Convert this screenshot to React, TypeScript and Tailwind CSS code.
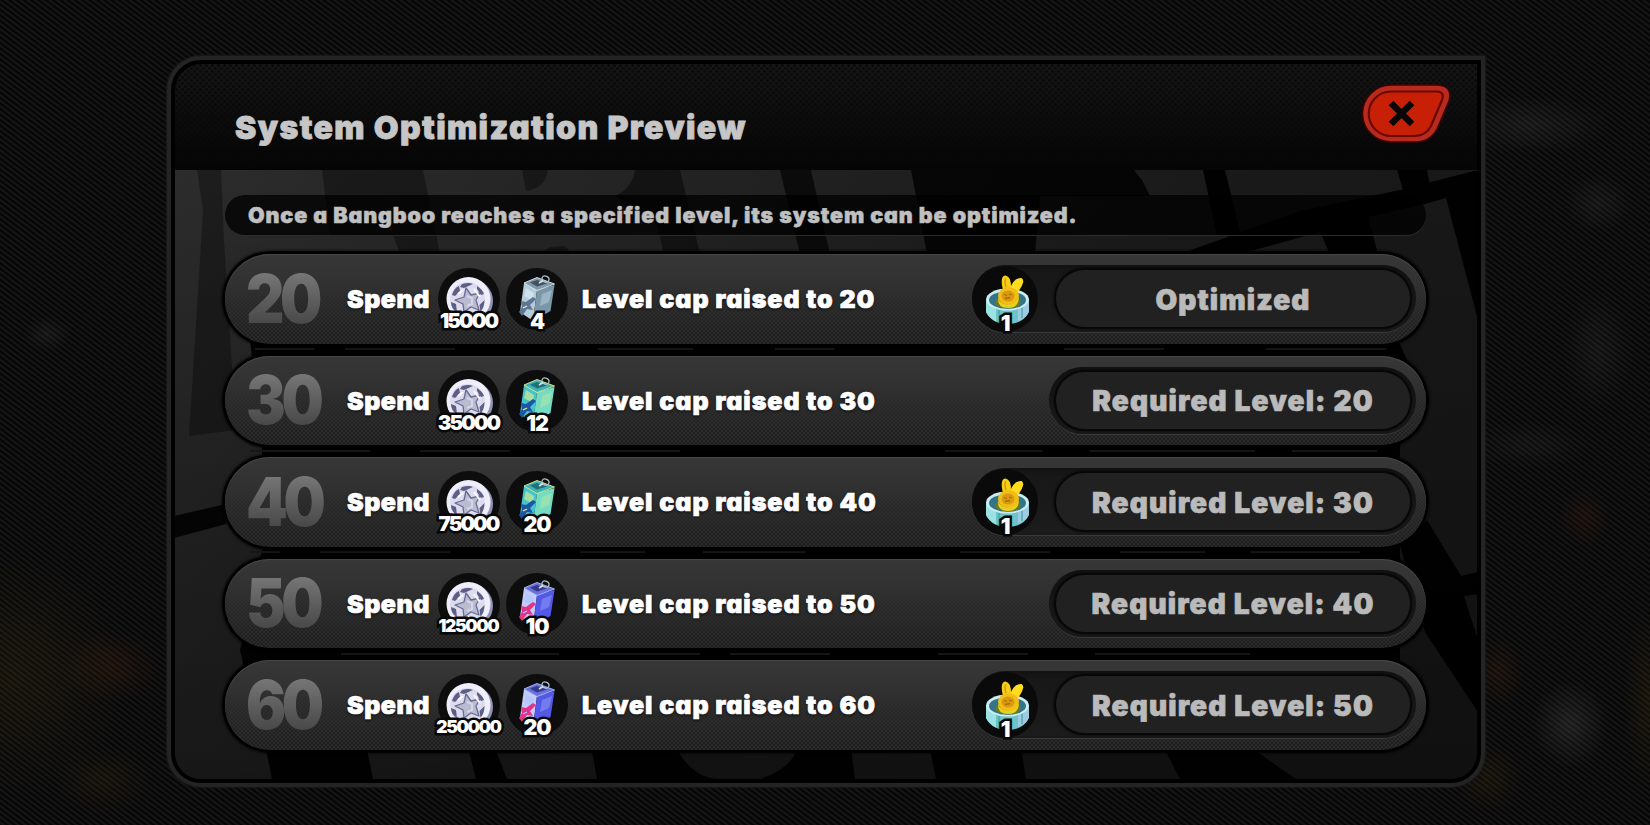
import React from "react";

type CanTone = "steel" | "teal" | "violet";

type Stage = {
  level: number;
  coins: string;
  parts: string;
  tone: CanTone;
  reward?: string;
  status: string;
};

const stages: Stage[] = [
  { level: 20, coins: "15000", parts: "4", tone: "steel", reward: "1", status: "Optimized" },
  { level: 30, coins: "35000", parts: "12", tone: "teal", status: "Required Level: 20" },
  { level: 40, coins: "75000", parts: "20", tone: "teal", reward: "1", status: "Required Level: 30" },
  { level: 50, coins: "125000", parts: "10", tone: "violet", status: "Required Level: 40" },
  { level: 60, coins: "250000", parts: "20", tone: "violet", reward: "1", status: "Required Level: 50" },
];

const tones: Record<CanTone, { top: string; left: string; right: string; line: string; mark: string; shine: string }> = {
  steel: { top: "#8299aa", left: "#b4cbdc", right: "#7a97a8", line: "#2c3b48", mark: "#5d7590", shine: "#dcecf6" },
  teal: { top: "#3fb3b4", left: "#45c4cc", right: "#74dcc4", line: "#155a66", mark: "#1b55a5", shine: "#dcee8e" },
  violet: { top: "#6a70dc", left: "#c6caf6", right: "#5458e6", line: "#25256e", mark: "#e0348c", shine: "#a9c4ff" },
};

function Coin() {
  return (
    <svg viewBox="0 0 62 62" className="block size-full">
      <circle cx="33" cy="33" r="22" fill="#9192b2" />
      <circle cx="30.500" cy="31" r="22" fill="#efeffb" />
      <circle cx="29.500" cy="31.500" r="17.500" fill="#dcdcee" />
      <path d="M14 27q2-7 7-9l1 5-5 5zM24 16q7-2 11 0l-9 4-4-1zM39 18q5 3 7 8l-3 1-4-6zM46.500 32q0 7-4 12l-1-7zM13 34l5 2 1 8q-6-3-6-10z" fill="#5c5e86" />
      <path d="M28 20 33 27 42 25 38 32 41 42 33 39 26 44 25 36 17 32 26 29Z" fill="#b9bbd0" stroke="#696b92" strokeWidth="1.300" strokeLinejoin="round" />
      <path d="M29 28 34 30 34 36 29 38" fill="none" stroke="#d5d6e6" strokeWidth="2" />
      <path d="M20 26 25 22M36 21 42 29" stroke="#fafaff" strokeWidth="2" />
    </svg>
  );
}

function Can({ tone }: { tone: CanTone }) {
  const c = tones[tone];
  return (
    <svg viewBox="0 0 62 62" className="block size-full">
      <path d="M18 15 31 22 27 53 14 44Z" fill={c.left} />
      <path d="M31 22 48.500 17 44.500 43 27 53Z" fill={c.right} />
      <path d="M18 15 31 9.500 48.500 16 31 22.500Z" fill={c.top} stroke={c.shine} strokeWidth="0.900" strokeLinejoin="round" />
      <path d="M24 14.500 31 12 41 15.500 31 18.500Z" fill={c.line} opacity="0.750" />
      <path d="M36 26 46 22 43 34 34 38Z" fill={c.shine} opacity="0.350" />
      <path d="M20 20 28 25 27 33 18 28Z" fill={c.shine} opacity="0.650" />
      <path d="M15 33 20 34 27 29 30 31 24 37 27 42 21 41 16 48 13 44 16 39Z" fill={c.mark} />
      <path d="M17 40 21 38" stroke={c.shine} strokeWidth="1.300" />
      <ellipse cx="39.500" cy="11" rx="3.600" ry="2.800" transform="rotate(25 39.500 11)" fill="none" stroke="#aebfc9" strokeWidth="1.300" />
      <path d="M33 15 37 12.500" stroke="#dbe6ec" strokeWidth="1.600" />
    </svg>
  );
}

function RabbitBadge() {
  return (
    <svg viewBox="0 0 66 66" className="block size-full">
      <path d="M14 33V46Q20 58 35.500 58T57 46V33Z" fill="#6cc3c8" />
      <path d="M14 35V46Q17 52 24 55.500V42Z" fill="#9be2e2" />
      <path d="M46 42V55Q55 52 57 45V36Z" fill="#9ccbe2" />
      <path d="M27 44V56M50 41V52" stroke="#4a9da5" strokeWidth="1.200" />
      <ellipse cx="35.500" cy="33.500" rx="21.500" ry="11" fill="#cdeef0" />
      <ellipse cx="35.500" cy="34" rx="18.500" ry="8.800" fill="#33748a" />
      <ellipse cx="36" cy="36.500" rx="12.500" ry="6" fill="#6f7a1c" />
      <path d="M31 24Q27.500 10 33.500 9.500Q39.500 10.500 39 22Z" fill="#f7cf18" />
      <path d="M38 22Q43 11 49.500 12Q54.500 15 45 27Z" fill="#ffdc1f" />
      <path d="M34 21Q32 14 34 12.500" stroke="#d59a08" strokeWidth="1.500" fill="none" />
      <ellipse cx="36.500" cy="30" rx="10.500" ry="9" fill="#f2bd15" />
      <path d="M26 32Q29 39 36.500 38.500T47 31Q46.500 42 36 42T26 32Z" fill="#e9cf22" />
      <ellipse cx="36" cy="30" rx="6.500" ry="5.500" fill="#d99a10" />
      <path d="M32 28.500l3 1M37 28l3 1M33 32.500l5-1" stroke="#a86d07" strokeWidth="1.300" />
    </svg>
  );
}

function Amount({ value }: { value: string }) {
  const size =
    value.length > 5
      ? "text-[17.500px] tracking-[-1.400px]"
      : value.length > 4
        ? "text-[20.500px] tracking-[-1.900px]"
        : "text-[21.500px] tracking-[-1px]";
  return (
    <span
      className={`absolute inset-x-[-10px] bottom-[-4px] h-[26px] text-center leading-[26px] text-white [-webkit-text-stroke:5px_#080808] [paint-order:stroke_fill] ${size}`}
    >
      {value}
    </span>
  );
}

function Slot({ value, children }: { value: string; children: React.ReactNode }) {
  return (
    <div className="relative size-[62px] shrink-0 rounded-full bg-[#0d0d0d]">
      {children}
      <Amount value={value} />
    </div>
  );
}

function StageRow({ stage }: { stage: Stage }) {
  return (
    <li className="relative flex h-[89.500px] items-center rounded-full bg-linear-to-b from-[#373737] via-[#2e2e2e] to-[#2a2a2a] pl-[23px] pr-[10px] shadow-[0_0_0_2.500px_#000,0_0_3px_3px_#000,inset_0_1px_1px_#484848]">
      <div className="pointer-events-none absolute inset-0 rounded-full bg-[radial-gradient(circle_at_1px_1px,#151515_0.900px,transparent_1.300px),radial-gradient(circle_at_3px_3px,#151515_0.900px,transparent_1.300px)] bg-[size:4px_4px] opacity-60 [mask-image:linear-gradient(to_bottom,transparent_35%,#000)]" />
      <div className="relative w-[99px] shrink-0">
        <div className="-ml-0.5 w-[99px] origin-left scale-x-[0.89] bg-linear-to-b from-[#7c7c7c] from-10% to-[#464646] to-85% bg-clip-text text-[67px] leading-[80px] tracking-[-5px] text-transparent">
          {stage.level}
        </div>
      </div>
      <div className="relative mt-px w-[90.500px] shrink-0 whitespace-nowrap text-[25px] leading-[30px] tracking-[0.500px] text-white [-webkit-text-stroke:0.700px_#fff] [text-shadow:0_1px_3px_#000]">
        Spend
      </div>
      <div className="relative mt-px flex gap-[6.500px]">
        <Slot value={stage.coins}>
          <Coin />
        </Slot>
        <Slot value={stage.parts}>
          <Can tone={stage.tone} />
        </Slot>
      </div>
      <div className="relative ml-[14px] mt-px grow whitespace-nowrap text-[25px] leading-[30px] tracking-[0.920px] text-white [-webkit-text-stroke:0.700px_#fff] [text-shadow:0_1px_3px_#000]">
        Level cap raised to {stage.level}
      </div>
      <div className="relative flex h-[67px] shrink-0 items-center justify-end rounded-full bg-linear-to-b from-[#171717] to-[#1c1c1c] pl-[7px] pr-[6px] shadow-[inset_0_2px_4px_#111,0_1px_0_#393939]">
        {stage.reward && (
          <div className="relative -ml-[7px] mr-[18px] size-[66px] rounded-full bg-[#0a0a0a]">
            <RabbitBadge />
            <Amount value={stage.reward} />
          </div>
        )}
        <div className="flex h-[57px] w-[354px] items-center justify-center whitespace-nowrap rounded-full bg-[#212121] pt-[2px] text-[28px] tracking-[1.150px] text-[#bababa] shadow-[0_0_0_2px_#070707,0_0_3px_2px_#070707] [-webkit-text-stroke:0.700px_#bababa]">
          {stage.status}
        </div>
      </div>
    </li>
  );
}

function PanelArt() {
  return (
    <svg viewBox="175 170 1302 609" className="absolute inset-0 size-full" preserveAspectRatio="none">
      <defs>
        <linearGradient id="wall" x1="0" y1="0" x2="1" y2="0.45">
          <stop offset="0" stopColor="#2c2c2c" />
          <stop offset="0.350" stopColor="#222222" />
          <stop offset="0.700" stopColor="#191919" />
          <stop offset="1" stopColor="#171717" />
        </linearGradient>
        <linearGradient id="fall" x1="0" y1="0" x2="0" y2="1">
          <stop offset="0" stopColor="#000" stopOpacity="0" />
          <stop offset="1" stopColor="#000" stopOpacity="0.300" />
        </linearGradient>
      </defs>
      <rect x="174" y="170" width="1304" height="609" fill="url(#wall)" />
      <rect x="174" y="170" width="1304" height="609" fill="url(#fall)" />
      <g fill="#000">
        <path opacity="0.320" d="M197 170H221L224 240 236 430 189 436 203 210Z" />
        <path opacity="0.360" d="M322 170H423L440 254H400L393 235 330 235Z" />
        <path opacity="0.360" d="M522 170H548Q546 188 526 191ZM540 254 550 247 565 246 572 254Z" />
        <path opacity="0.450" d="M635 170H680L700 254H664L657 225 615 196Q632 188 635 170Z" />
        <path opacity="0.650" d="M780 170H811L830 254H800Z" />
        <path opacity="0.800" d="M911 170H1134L1142 180 1150 196H1040L1035 254H927Z" />
        <path opacity="0.950" d="M1203 170H1225L1241 236H1217ZM1180 254 1300 211 1400 190 1474 171H1478V320L1446 198 1425 204 1368 217 1378 254H1330L1320 232 1240 254ZM1397 170H1427L1433 200H1406Z" />
        <path opacity="0.850" d="M174 516 226 504V524L174 538Z" />
        <path opacity="0.950" d="M1427 520 1461 576 1478 572V594L1464 596 1478 640V712L1425 632 1400 545Z" />
        <path opacity="0.920" d="M250 340H1398L1408 362 1400 450V640H1400V740H260L240 650 262 550 262 450Z" />
        <path opacity="0.920" d="M264 740H365L373 779H272ZM466 740H492L507 779H476ZM590 740H672Q690 779 720 779H597ZM800 740H850L855 779H760Q795 768 800 740ZM928 740H1020L1026 779H936ZM1160 740H1240L1296 779H1180Z" />
      </g>
      <g fill="#161616">
        <path d="M255 348h60v2h-60zM345 348h110v2h-110zM598 348h95v2h-95zM775 348h60v2h-60zM1064 348h100v2h-100zM1266 348h120v2h-120z" />
        <path d="M250 450h120v2h-120zM420 450h90v2h-90zM560 450h120v2h-120zM945 450h98v2h-98zM1090 450h165v2h-165zM1292 450h85v2h-85z" />
        <path d="M250 551h30v2h-30zM320 551h130v2h-130zM580 551h65v2h-65zM703 551h103v2h-103zM960 551h90v2h-90zM1120 551h85v2h-85zM1250 551h110v2h-110z" />
        <path d="M341 653h218v2h-218zM600 653h100v2h-100zM730 653h100v2h-100zM938 653h90v2h-90zM1095 653h155v2h-155z" />
      </g>
    </svg>
  );
}

function CloseButton() {
  return (
    <button type="button" aria-label="Close" className="block h-[61px] w-[90px]">
      <svg viewBox="0 0 90 61" className="block size-full">
        <path d="M29 2H76Q91 3 87 18L75 46Q68 59 53 59H29A28.500 28.500 0 0 1 29 2Z" fill="#b82a1d" stroke="#3c0300" strokeWidth="1.500" />
        <path d="M29 8.500H75Q83 9 80 17L69 43Q64 53 52 53H29A22.200 22.200 0 0 1 29 8.500Z" fill="#c82007" stroke="#6a0800" strokeWidth="2.200" />
        <path d="M29 20 50 41M50 20 29 41" stroke="#0b0503" strokeWidth="6.500" />
      </svg>
    </button>
  );
}

export default function App() {
  return (
    <main className="relative flex h-[825px] w-[1650px] overflow-hidden bg-[#080808] pl-[167px] pt-[56px] font-['Inter',sans-serif] font-black [font-feature-settings:'cv11']">
      <div className="absolute inset-0 bg-[repeating-linear-gradient(37deg,#020202_0px,#191919_2.200px,#020202_4.400px)]" />
      <div className="absolute inset-0 bg-[radial-gradient(ellipse_110px_120px_at_15px_675px,#5a43102c,transparent),radial-gradient(ellipse_50px_36px_at_112px_666px,#7a350f28,transparent),radial-gradient(ellipse_50px_34px_at_102px_780px,#6b4a1020,transparent),radial-gradient(ellipse_24px_18px_at_47px_334px,#7777771c,transparent),radial-gradient(ellipse_38px_44px_at_1570px_724px,#8a8a8a2a,transparent),radial-gradient(ellipse_80px_30px_at_1530px_125px,#77777720,transparent),radial-gradient(ellipse_34px_30px_at_1598px_203px,#7777771c,transparent),radial-gradient(ellipse_34px_60px_at_1598px_350px,#77777718,transparent),radial-gradient(ellipse_60px_24px_at_1530px_445px,#77777714,transparent),radial-gradient(ellipse_26px_30px_at_1584px_517px,#8a331220,transparent),radial-gradient(ellipse_26px_34px_at_1498px_672px,#8a3c1220,transparent),radial-gradient(ellipse_34px_34px_at_1488px_778px,#7a520f20,transparent),radial-gradient(ellipse_24px_90px_at_1648px_700px,#7a5a0f20,transparent)]" />

      <section className="relative flex h-[731px] w-[1318px] flex-col overflow-hidden rounded-[34px] rounded-tr-none border-[4px] border-[#242424] bg-black p-[4px] shadow-[0_0_2px_1px_#1a1a1a]">
        <div className="flex grow flex-col overflow-hidden rounded-[26px] rounded-tr-none">
          <header className="relative flex h-[106px] shrink-0 items-start justify-between bg-linear-to-b from-[#161616] to-[#050505] pl-[60px] pr-[25px]">
            <div className="absolute inset-0 bg-[radial-gradient(circle_at_1.500px_1.500px,#020202_1px,transparent_1.700px),radial-gradient(circle_at_4.500px_4.500px,#020202_1px,transparent_1.700px)] bg-[size:6px_6px] opacity-60 [mask-image:linear-gradient(to_bottom,#000,transparent_90%)]" />
            <h1 className="relative mt-[44px] whitespace-nowrap text-[32px] leading-[40px] tracking-[1.400px] text-[#c6c6c6] [-webkit-text-stroke:0.800px_#c6c6c6]">
              System Optimization Preview
            </h1>
            <div className="relative mt-[19px]">
              <CloseButton />
            </div>
          </header>

          <div className="relative grow">
            <PanelArt />
            <div className="relative pl-[50px] pr-[51px] pt-[25px]">
              <p className="flex h-10 items-center whitespace-nowrap rounded-[20px] bg-black/75 pl-[23px] text-[21.500px] tracking-[0.870px] text-[#c0c0c0] shadow-[0_1px_0_#2c2c2c] [-webkit-text-stroke:0.500px_#c0c0c0]">
                Once a Bangboo reaches a specified level, its system can be optimized.
              </p>
              <ul className="mt-[19px] flex flex-col gap-3">
                {stages.map((stage) => (
                  <StageRow key={stage.level} stage={stage} />
                ))}
              </ul>
            </div>
          </div>
        </div>
      </section>
    </main>
  );
}
